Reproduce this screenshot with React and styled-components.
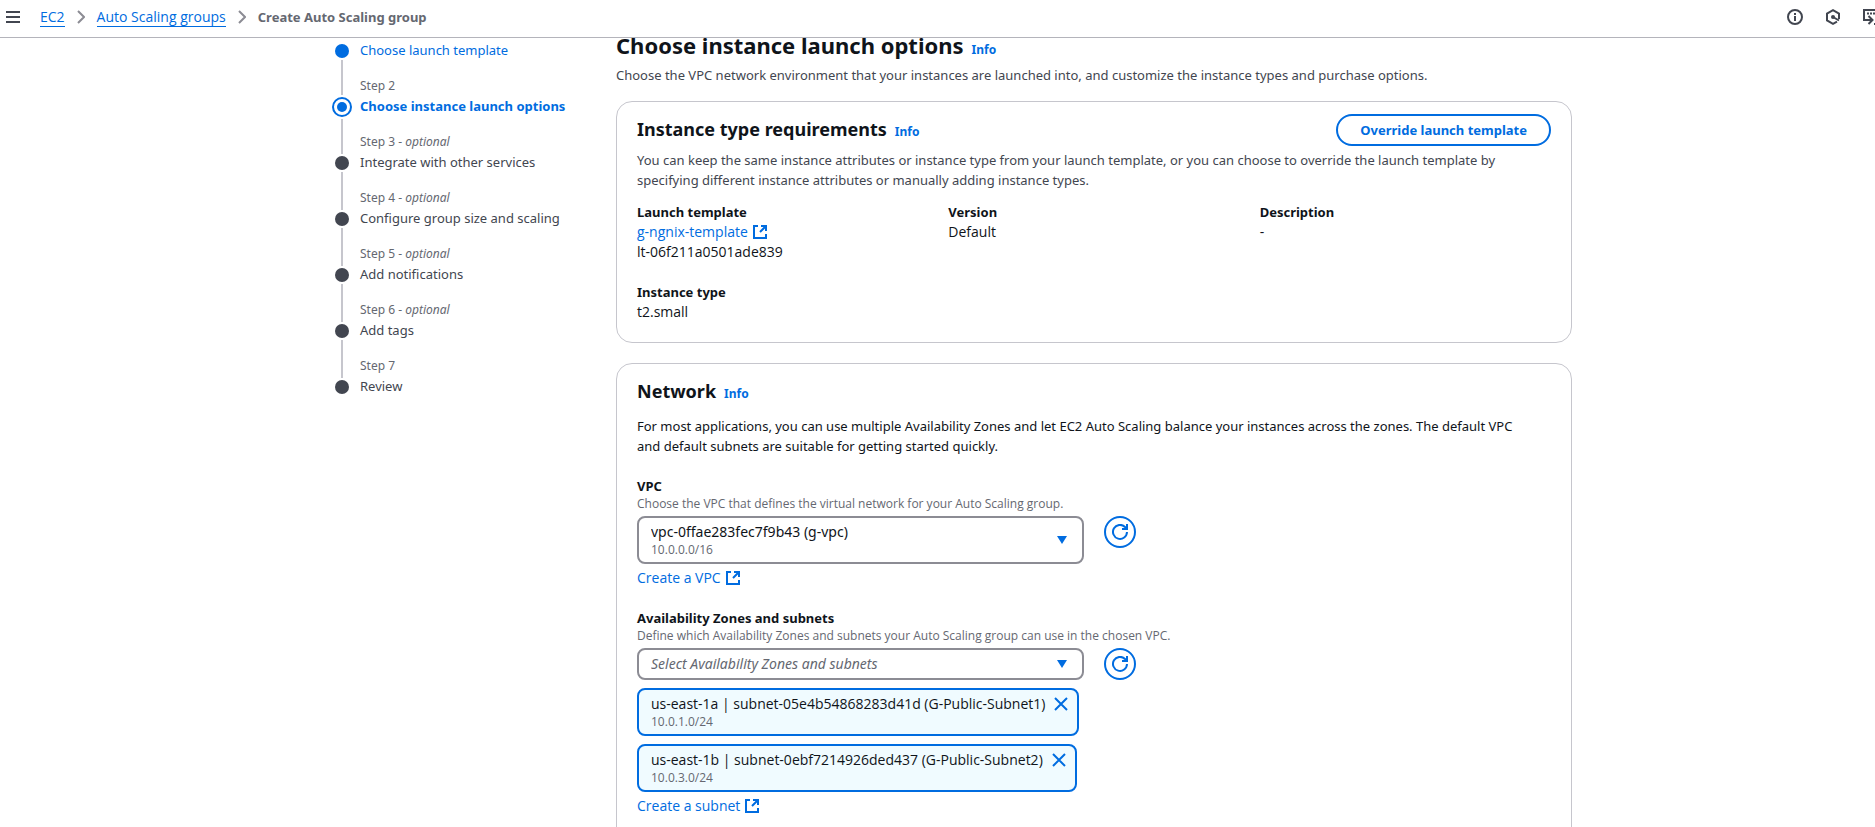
import React from 'react';
import styled, { createGlobalStyle, css } from 'styled-components';

const color = {
  link: '#006ce0',
  heading: '#0f141a',
  body: '#424650',
  muted: '#656871',
  line: '#c6c6cd',
  control: '#8c8c94',
  token: '#f0fbff',
};

const compactFont = '"Open Sans", "Noto Sans", sans-serif';

const GlobalStyle = createGlobalStyle`
  *, *::before, *::after { box-sizing: border-box; }
  html { scrollbar-width: none; }
  body {
    margin: 0;
    background: #fff;
    color: ${color.heading};
    font: 400 13px/20px "Noto Sans", "Open Sans", sans-serif;
  }
  h1, h2, p, ul, ol, dl, dd { margin: 0; padding: 0; }
  ol, ul { list-style: none; }
  button, select { font: inherit; }
  svg { display: block; flex: none; }
`;

const TopBar = styled.header`
  position: sticky;
  top: 0;
  z-index: 2;
  display: flex;
  align-items: center;
  height: 38px;
  padding: 0 0 3px 5px;
  overflow: hidden;
  background: #fff;
  border-bottom: 1px solid #b4b4bb;
`;

const IconButton = styled.button`
  display: inline-flex;
  flex: none;
  padding: 0;
  border: 0;
  background: none;
  color: ${(p) => (p.$blue ? color.link : color.body)};
  cursor: pointer;
`;

const Crumbs = styled.ol`
  display: flex;
  align-items: center;
  gap: 12px;
  margin-left: 19px;
  color: ${color.control};

  li {
    display: flex;
    align-items: center;
    gap: 12px;
  }
`;

const CrumbLink = styled.a`
  color: ${color.link};
  font-family: ${compactFont};
  font-size: 14px;
  line-height: 18px;
  text-decoration: none;
  border-bottom: 1px solid ${color.link};
`;

const CrumbCurrent = styled.span`
  color: ${color.muted};
  font-weight: 700;
`;

const Tools = styled.div`
  display: flex;
  gap: 22px;
  margin: 0 -4px 0 auto;
`;

const Main = styled.main`
  display: grid;
  grid-template-columns: 240px minmax(0, 1fr);
  gap: 44px;
  max-width: 1269px;
  margin: -7px auto 0;
  padding-left: 29px;
`;

const Stepper = styled.ol`
  padding-top: 11px;
`;

const Step = styled.li`
  display: flex;
  gap: 8px;
`;

const Rail = styled.div`
  display: flex;
  flex: none;
  flex-direction: column;
  align-items: center;
  width: 20px;
`;

const Connector = styled.span`
  flex: 1;
  width: 2px;
  background: ${color.line};
`;

const Bullet = styled.span`
  z-index: 1;
  flex: none;
  padding: 2px 0;
  background: #fff;
  ${(p) => p.$active && css`margin-bottom: -3px;`}

  &::before {
    content: "";
    display: block;
    width: ${(p) => (p.$active ? 20 : 14)}px;
    height: ${(p) => (p.$active ? 20 : 14)}px;
    border-radius: 50%;
    background: ${(p) => (p.$blue ? color.link : color.body)};
    ${(p) => p.$active && css`
      padding: 3px;
      border: 2px solid ${color.link};
      background: ${color.link} content-box;
    `}
  }
`;

const StepText = styled.div`
  padding-top: ${(p) => (p.$first ? 0 : 18)}px;
`;

const StepLabel = styled.div`
  margin-bottom: 4px;
  color: ${color.muted};
  font-size: 12px;
  line-height: 16px;
`;

const StepTitle = styled.div`
  padding-bottom: 2px;
  color: ${(p) => (p.$blue ? color.link : color.body)};
  font-weight: ${(p) => (p.$active ? 700 : 400)};
  line-height: 16px;

  a { color: inherit; text-decoration: none; }
`;

const TitleRow = styled.div`
  display: flex;
  align-items: baseline;
  gap: 8px;
  padding-bottom: 2px;
`;

const H1 = styled.h1`
  font-size: 22px;
  line-height: 28px;
`;

const H2 = styled.h2`
  font-size: 18px;
  line-height: 24px;
`;

const InfoLink = styled.a`
  color: ${color.link};
  font-size: 12px;
  font-weight: 700;
  line-height: 16px;
  text-decoration: none;
`;

const Text = styled.p`
  color: ${(p) => (p.$dark ? color.heading : color.body)};
`;

const PageHead = styled.div`
  padding-bottom: 16px;

  ${Text} { margin-top: 4px; }
`;

const Card = styled.section`
  margin-bottom: 20px;
  padding: 12px 20px 20px;
  border: 1px solid ${color.line};
  border-radius: 16px;

  &:last-child { padding-bottom: 40px; }
`;

const CardHead = styled.div`
  display: flex;
  align-items: center;
  justify-content: space-between;
  min-height: 32px;
  margin-bottom: ${(p) => (p.$roomy ? 8 : 4)}px;
`;

const PillButton = styled.button`
  height: 32px;
  padding: 0 22px;
  border: 2px solid ${color.link};
  border-radius: 20px;
  background: #fff;
  color: ${color.link};
  font-weight: 700;
  cursor: pointer;
`;

const RoundButton = styled(IconButton)`
  align-items: center;
  justify-content: center;
  width: 32px;
  height: 32px;
  border: 2px solid ${color.link};
  border-radius: 50%;
  background: #fff;
`;

const Facts = styled.dl`
  display: grid;
  grid-template-columns: repeat(3, minmax(0, 1fr));
  gap: 20px;
  margin-top: 12px;

  dt { font-weight: 700; }
  dd {
    font-family: ${compactFont};
    font-size: 14px;
  }
`;

const ExternalLink = styled.a`
  display: flex;
  align-items: center;
  gap: 4px;
  color: ${color.link};
  font-family: ${compactFont};
  font-size: 14px;
  text-decoration: none;
`;

const Ident = styled.div`
  font-family: ${compactFont};
  font-size: 14px;
`;

const Field = styled.div`
  display: flex;
  flex-direction: column;
  align-items: flex-start;
  margin-top: 20px;
`;

const Label = styled.label`
  font-weight: 700;
`;

const Hint = styled.div`
  color: ${color.muted};
  font-family: ${compactFont};
  font-size: 12px;
  line-height: 16px;
`;

const ControlRow = styled.div`
  display: grid;
  grid-template-columns: repeat(2, minmax(0, 1fr));
  gap: 20px;
  width: 100%;
  margin: 4px 0;
`;

const SelectBox = styled.div`
  position: relative;

  svg {
    position: absolute;
    top: 50%;
    right: 17px;
    margin-top: -4px;
    pointer-events: none;
  }
`;

const Select = styled.select`
  display: block;
  width: 100%;
  height: ${(p) => (p.$tall ? 48 : 32)}px;
  padding: ${(p) => (p.$tall ? '4px 40px 20px 12px' : '4px 40px 4px 12px')};
  border: 2px solid ${color.control};
  border-radius: 8px;
  appearance: none;
  background: #fff;
  color: ${(p) => (p.$placeholder ? color.muted : color.heading)};
  font-size: 14px;
  line-height: 20px;
  font-style: ${(p) => (p.$placeholder ? 'italic' : 'normal')};
`;

const SelectHint = styled(Hint)`
  position: absolute;
  bottom: 6px;
  left: 14px;
  pointer-events: none;
`;

const Tokens = styled.ul`
  display: flex;
  flex-direction: column;
  align-items: flex-start;
  gap: 8px;
  margin: 4px 0;
`;

const Token = styled.li`
  display: flex;
  align-items: flex-start;
  gap: 8px;
  padding: 4px 8px 4px 12px;
  border: 2px solid ${color.link};
  border-radius: 8px;
  background: ${color.token};

  ${IconButton} { margin-top: 2px; }
`;

const MenuIcon = () => (
  <svg width="16" height="16" viewBox="0 0 16 16" fill="none" stroke="currentColor" strokeWidth="2">
    <path d="M1 3h14M1 8h14M1 13h14" />
  </svg>
);

const Chevron = () => (
  <svg width="8" height="14" viewBox="0 0 8 14" fill="none" stroke="currentColor" strokeWidth="2">
    <path d="M1 1l6 6-6 6" />
  </svg>
);

const InfoIcon = () => (
  <svg width="16" height="16" viewBox="0 0 16 16" fill="none" stroke="currentColor" strokeWidth="2">
    <circle cx="8" cy="8" r="7" />
    <path d="M8 7v5M8 4v2" />
  </svg>
);

const HexIcon = () => (
  <svg width="16" height="16" viewBox="0 0 16 16" fill="none" stroke="currentColor" strokeWidth="2">
    <path d="M14 10V4.500L8 1.200 2 4.500v7l6 3.300 4-2.200" />
    <circle cx="8" cy="8" r="2" fill="currentColor" stroke="none" />
    <path d="M8 8l6 3.500" />
  </svg>
);

const ShellIcon = () => (
  <svg width="16" height="16" viewBox="0 0 16 16" fill="none" stroke="currentColor" strokeWidth="2">
    <path d="M9 11H1V1h14v10" />
    <path d="M4 4.500h2M7 4.500h2M10 4.500h2" />
    <path d="M5.500 7L9.500 11l-4 4M11 15h4" />
  </svg>
);

const ExternalIcon = () => (
  <svg width="16" height="16" viewBox="0 0 16 16" fill="none" stroke="currentColor" strokeWidth="2">
    <path d="M6 2H2v12h12v-4" />
    <path d="M9 2h5v5M14 2L8 8" />
  </svg>
);

const RefreshIcon = () => (
  <svg width="16" height="16" viewBox="0 0 16 16" fill="none" stroke="currentColor" strokeWidth="2">
    <path d="M15 8a7 7 0 1 1-2-5l1.500 2" />
    <path d="M15 0v5h-5" />
  </svg>
);

const CaretIcon = () => (
  <svg width="10" height="8" viewBox="0 0 10 8" fill={color.link}>
    <path d="M0 0h10L5 8z" />
  </svg>
);

const CloseIcon = () => (
  <svg width="16" height="16" viewBox="0 0 16 16" fill="none" stroke="currentColor" strokeWidth="2">
    <path d="M2 2l12 12M14 2L2 14" />
  </svg>
);

const steps = [
  { title: 'Choose launch template', done: true },
  { n: 2, title: 'Choose instance launch options', active: true },
  { n: 3, title: 'Integrate with other services', optional: true },
  { n: 4, title: 'Configure group size and scaling', optional: true },
  { n: 5, title: 'Add notifications', optional: true },
  { n: 6, title: 'Add tags', optional: true },
  { n: 7, title: 'Review' },
];

const subnets = [
  { name: 'us-east-1a | subnet-05e4b54868283d41d (G-Public-Subnet1)', cidr: '10.0.1.0/24' },
  { name: 'us-east-1b | subnet-0ebf7214926ded437 (G-Public-Subnet2)', cidr: '10.0.3.0/24' },
];

export default function App() {
  return (
    <>
      <GlobalStyle />
      <TopBar>
        <IconButton aria-label="Open navigation"><MenuIcon /></IconButton>
        <nav aria-label="Breadcrumbs">
          <Crumbs>
            <li><CrumbLink href="#ec2">EC2</CrumbLink><Chevron /></li>
            <li><CrumbLink href="#groups">Auto Scaling groups</CrumbLink><Chevron /></li>
            <li><CrumbCurrent aria-current="page">Create Auto Scaling group</CrumbCurrent></li>
          </Crumbs>
        </nav>
        <Tools>
          <IconButton aria-label="Info"><InfoIcon /></IconButton>
          <IconButton aria-label="Assistant"><HexIcon /></IconButton>
          <IconButton aria-label="CloudShell"><ShellIcon /></IconButton>
        </Tools>
      </TopBar>

      <Main>
        <nav aria-label="Steps">
          <Stepper>
            {steps.map((s) => (
              <Step key={s.title}>
                <Rail>
                  {s.n && <Connector />}
                  <Bullet $active={s.active} $blue={s.done || s.active} />
                </Rail>
                <StepText $first={!s.n}>
                  {s.n && (
                    <StepLabel>
                      Step {s.n}{s.optional && <> - <i>optional</i></>}
                    </StepLabel>
                  )}
                  <StepTitle $active={s.active} $blue={s.done || s.active}>
                    {s.done ? <a href="#step-1">{s.title}</a> : s.title}
                  </StepTitle>
                </StepText>
              </Step>
            ))}
          </Stepper>
        </nav>

        <div>
          <PageHead>
            <TitleRow>
              <H1>Choose instance launch options</H1>
              <InfoLink href="#info">Info</InfoLink>
            </TitleRow>
            <Text>
              Choose the VPC network environment that your instances are launched into, and customize the
              instance types and purchase options.
            </Text>
          </PageHead>

          <Card>
            <CardHead>
              <TitleRow>
                <H2>Instance type requirements</H2>
                <InfoLink href="#info-type">Info</InfoLink>
              </TitleRow>
              <PillButton>Override launch template</PillButton>
            </CardHead>
            <Text>
              You can keep the same instance attributes or instance type from your launch template, or you can
              choose to override the launch template by specifying different instance attributes or manually
              adding instance types.
            </Text>
            <Facts>
              <div>
                <dt>Launch template</dt>
                <dd>
                  <ExternalLink href="#template">g-ngnix-template <ExternalIcon /></ExternalLink>
                  <Ident>lt-06f211a0501ade839</Ident>
                </dd>
              </div>
              <div>
                <dt>Version</dt>
                <dd>Default</dd>
              </div>
              <div>
                <dt>Description</dt>
                <dd>-</dd>
              </div>
              <div>
                <dt>Instance type</dt>
                <dd>t2.small</dd>
              </div>
            </Facts>
          </Card>

          <Card>
            <CardHead $roomy>
              <TitleRow>
                <H2>Network</H2>
                <InfoLink href="#info-network">Info</InfoLink>
              </TitleRow>
            </CardHead>
            <Text $dark>
              For most applications, you can use multiple Availability Zones and let EC2 Auto Scaling balance
              your instances across the zones. The default VPC and&nbsp;default subnets are suitable for getting
              started quickly.
            </Text>

            <Field>
              <Label htmlFor="vpc">VPC</Label>
              <Hint>Choose the VPC that defines the virtual network for your Auto Scaling group.</Hint>
              <ControlRow>
                <SelectBox>
                  <Select id="vpc" $tall>
                    <option>vpc-0ffae283fec7f9b43 (g-vpc)</option>
                  </Select>
                  <SelectHint>10.0.0.0/16</SelectHint>
                  <CaretIcon />
                </SelectBox>
                <RoundButton $blue aria-label="Refresh VPCs"><RefreshIcon /></RoundButton>
              </ControlRow>
              <ExternalLink href="#create-vpc">Create a VPC <ExternalIcon /></ExternalLink>
            </Field>

            <Field>
              <Label htmlFor="zones">Availability Zones and subnets</Label>
              <Hint>
                Define which Availability Zones and subnets your Auto Scaling group can use in the chosen VPC.
              </Hint>
              <ControlRow>
                <SelectBox>
                  <Select id="zones" $placeholder>
                    <option>Select Availability Zones and subnets</option>
                  </Select>
                  <CaretIcon />
                </SelectBox>
                <RoundButton $blue aria-label="Refresh subnets"><RefreshIcon /></RoundButton>
              </ControlRow>
              <Tokens>
                {subnets.map((s) => (
                  <Token key={s.name}>
                    <div>
                      <Ident>{s.name}</Ident>
                      <Hint>{s.cidr}</Hint>
                    </div>
                    <IconButton $blue aria-label={'Remove ' + s.name}><CloseIcon /></IconButton>
                  </Token>
                ))}
              </Tokens>
              <ExternalLink href="#create-subnet">Create a subnet <ExternalIcon /></ExternalLink>
            </Field>
          </Card>
        </div>
      </Main>
    </>
  );
}
